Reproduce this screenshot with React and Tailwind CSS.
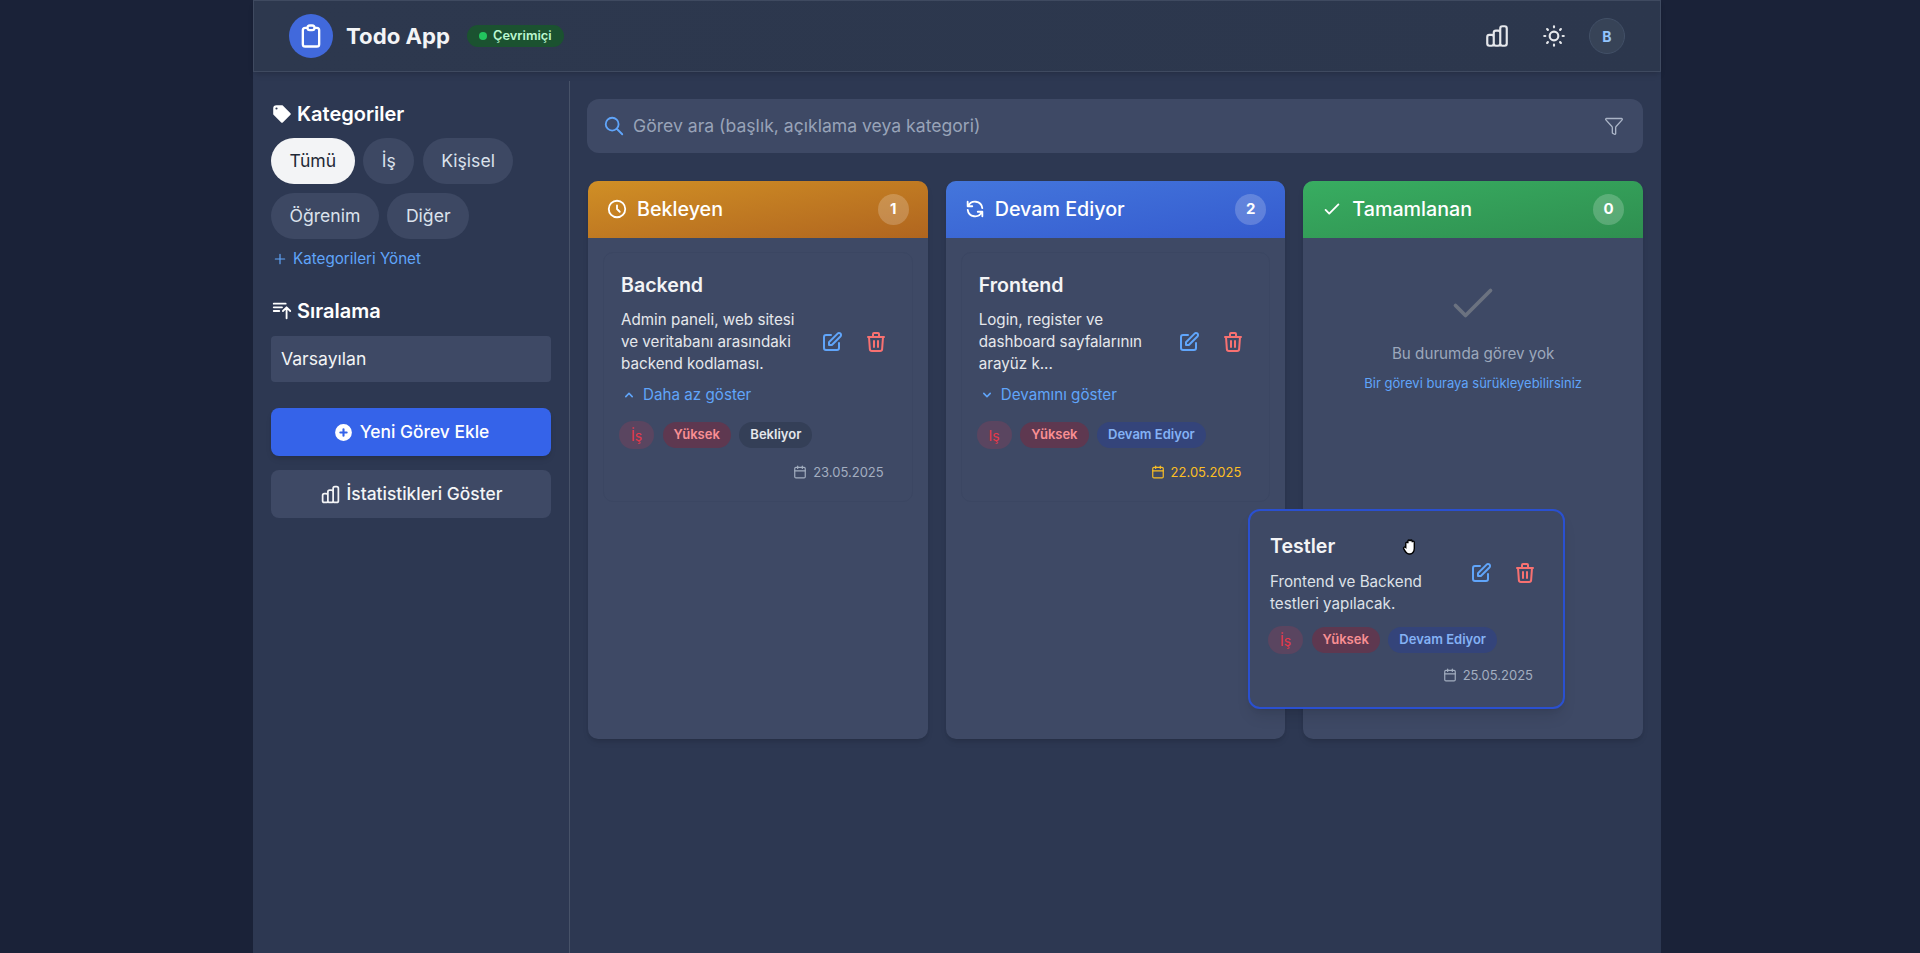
import {
  HiOutlineClipboard,
  HiOutlineChartBar,
  HiOutlineSun,
  HiTag,
  HiOutlineSortAscending,
  HiPlusCircle,
  HiOutlineClock,
  HiOutlineRefresh,
  HiOutlineCheck,
  HiOutlinePencilAlt,
  HiOutlineTrash,
  HiOutlineSearch,
  HiChevronUp,
  HiChevronDown,
  HiOutlinePlus,
} from 'react-icons/hi';
import { Calendar, Filter } from 'lucide-react';

function Chip({ label, active }) {
  return (
    <button
      className={`h-[46px] px-[18.5px] rounded-full text-[17.6px] ${
        active ? 'bg-[#f3f4f6] text-[#1f2937]' : 'bg-[#3d4863] text-[#dbe2ec]'
      }`}
    >
      {label}
    </button>
  );
}

function Badge({ label, className }) {
  return (
    <span
      className={`h-[26px] px-[11px] rounded-full flex items-center text-[13px] font-semibold ${className}`}
    >
      {label}
    </span>
  );
}

function Tags({ status, statusClass, dotted }) {
  return (
    <div className="flex items-center gap-[8.5px] -ml-[2px]">
      <span className="h-[28px] w-[35px] rounded-full bg-[#5a4560] text-[#e5394a] text-[14px] flex items-center justify-center">
        {dotted ? 'İş' : 'Iş'}
      </span>
      <Badge label="Yüksek" className="bg-[#5e3850] text-[#f98f93]" />
      <Badge label={status} className={statusClass} />
    </div>
  );
}

function CardActions({ className }) {
  return (
    <div className={`flex items-center gap-[20px] shrink-0 ${className}`}>
      <HiOutlinePencilAlt className="w-[24px] h-[24px] text-[#60a5fa]" />
      <HiOutlineTrash className="w-[24px] h-[24px] text-[#f87171]" />
    </div>
  );
}

function TaskCard({ title, lines, toggle, up, status, statusClass, date, dateClass, dotted }) {
  return (
    <div className="h-[250px] rounded-[10px] border border-[#3b4662] pl-[17px] pr-[17px] pt-[17px]">
      <h3 className="text-[19.6px] leading-[30px] font-semibold text-[#f3f4f6]">{title}</h3>
      <div className="flex items-center justify-between mt-[9px]">
        <p className="text-[15.2px] leading-[22px] text-[#e5e7eb] w-[190px]">
          {lines.map((l) => (
            <span key={l} className="block whitespace-nowrap">
              {l}
            </span>
          ))}
        </p>
        <CardActions className="mr-[7px]" />
      </div>
      <button className="flex items-center text-[15.2px] leading-[22px] text-[#60a5fa] mt-[9px]">
        {up ? (
          <HiChevronUp className="w-[16px] h-[16px] mr-[6px]" />
        ) : (
          <HiChevronDown className="w-[16px] h-[16px] mr-[6px]" />
        )}
        {toggle}
      </button>
      <div className="mt-[15px]">
        <Tags status={status} statusClass={statusClass} dotted={dotted} />
      </div>
      <div className={`flex items-center justify-end gap-[6px] mt-[13px] mr-[11px] text-[13px] leading-[20px] ${dateClass}`}>
        <Calendar className="w-[14px] h-[14px]" strokeWidth={2} />
        {date}
      </div>
    </div>
  );
}

function Column({ title, count, icon, headerClass, children }) {
  return (
    <div className="flex-1 h-[558px] rounded-[10px] bg-[#3e4965] shadow-md overflow-hidden">
      <div className={`h-[57px] flex items-center justify-between pl-[18px] pr-[19px] ${headerClass}`}>
        <div className="flex items-center gap-[9px] text-white text-[19.7px] font-medium">
          {icon}
          {title}
        </div>
        <span className="w-[31px] h-[31px] rounded-full bg-white/20 text-white text-[15px] font-bold flex items-center justify-center">
          {count}
        </span>
      </div>
      <div className="px-[15px] pt-[14px]">{children}</div>
    </div>
  );
}

export default function App() {
  return (
    <div
      className="h-[953px] overflow-hidden bg-[#1a2238] flex justify-center"
      style={{ fontFamily: 'Inter, "Noto Sans", sans-serif' }}
    >
      <div className="w-[1408px] h-full bg-[#2d3852] flex flex-col mr-[6px] relative">
        <header className="h-[72px] shrink-0 flex items-center justify-between pl-[35px] pr-[35px] bg-gradient-to-r from-[#2d384e] to-[#2c374d] border border-[#3f4a60] shadow-md">
          <div className="flex items-center">
            <span className="w-[44px] h-[44px] rounded-full bg-[#4169dc] flex items-center justify-center">
              <HiOutlineClipboard className="w-[28px] h-[28px] text-white" />
            </span>
            <span className="ml-[13px] text-[22.2px] font-bold text-[#f3f4f6]">Todo App</span>
            <span className="ml-[17px] h-[22px] pl-[12px] pr-[12px] rounded-full bg-[#1b5230] text-[#bbf7d0] text-[12.8px] font-semibold flex items-center gap-[6px]">
              <span className="w-[8px] h-[8px] rounded-full bg-[#22c55e]" />
              Çevrimiçi
            </span>
          </div>
          <div className="flex items-center">
            <HiOutlineChartBar className="w-[26px] h-[26px] text-[#e5e7eb]" />
            <HiOutlineSun className="w-[26px] h-[26px] text-[#e5e7eb] ml-[31px]" />
            <span className="ml-[22px] w-[36px] h-[36px] rounded-full bg-[#374357] border border-[#425067] text-[#93c5fd] text-[14px] font-bold flex items-center justify-center">
              B
            </span>
          </div>
        </header>

        <div className="flex flex-1 min-h-0">
          <aside className="w-[317px] shrink-0 pt-[18px] pl-[18px] pr-[18px] border-r border-[#475268] mt-[9px]">
            <h2 className="flex items-center gap-[4px] text-[20px] leading-[30px] font-semibold text-white">
              <HiTag className="w-[22px] h-[22px]" />
              Kategoriler
            </h2>
            <div className="flex flex-wrap gap-x-[8.5px] gap-y-[9px] mt-[9px]">
              <Chip label="Tümü" active />
              <Chip label="İş" />
              <Chip label="Kişisel" />
              <Chip label="Öğrenim" />
              <Chip label="Diğer" />
            </div>
            <button className="flex items-center gap-[6px] mt-[9px] ml-[2px] text-[15.2px] leading-[22px] text-[#60a5fa]">
              <HiOutlinePlus className="w-[14px] h-[14px]" />
              Kategorileri Yönet
            </button>
            <h2 className="flex items-center gap-[4px] mt-[26px] text-[20px] leading-[30px] font-semibold text-white">
              <HiOutlineSortAscending className="w-[22px] h-[22px]" />
              Sıralama
            </h2>
            <div className="mt-[10px] h-[46px] rounded-[4px] bg-[#3e4965] flex items-center pl-[10px] text-[17.6px] text-[#f3f4f6]">
              Varsayılan
            </div>
            <button className="mt-[26px] w-full h-[48px] rounded-[8px] bg-[#3563e9] text-white text-[17.4px] font-medium flex items-center justify-center gap-[6px] shadow-md">
              <HiPlusCircle className="w-[21px] h-[21px]" />
              Yeni Görev Ekle
            </button>
            <button className="mt-[14px] w-full h-[48px] rounded-[8px] bg-[#3e4965] text-[#f3f4f6] text-[17.4px] font-medium flex items-center justify-center gap-[6px]">
              <HiOutlineChartBar className="w-[21px] h-[21px]" />
              İstatistikleri Göster
            </button>
          </aside>

          <main className="flex-1 pl-[18px] pr-[18px] pt-[27px]">
            <div className="h-[54px] -ml-[1px] rounded-[12px] bg-[#3e4965] flex items-center justify-between pl-[16px] pr-[19px]">
              <div className="flex items-center gap-[8px] text-[17.6px] text-[#98a3b8]">
                <HiOutlineSearch className="w-[22px] h-[22px] text-[#60a5fa]" />
                Görev ara (başlık, açıklama veya kategori)
              </div>
              <Filter className="w-[20px] h-[20px] text-[#aab4c6]" strokeWidth={1.6} />
            </div>

            <div className="flex gap-[18px] mt-[28px]">
              <Column
                title="Bekleyen"
                count="1"
                headerClass="bg-gradient-to-br from-[#d08f25] to-[#b0651f]"
                icon={<HiOutlineClock className="w-[22px] h-[22px]" />}
              >
                <TaskCard
                  title="Backend"
                  lines={['Admin paneli, web sitesi', 've veritabanı arasındaki', 'backend kodlaması.']}
                  toggle="Daha az göster"
                  up
                  dotted
                  status="Bekliyor"
                  statusClass="bg-[#343f57] text-[#e5e7eb]"
                  date="23.05.2025"
                  dateClass="text-[#a3aec0]"
                />
              </Column>
              <Column
                title="Devam Ediyor"
                count="2"
                headerClass="bg-gradient-to-br from-[#4476dc] to-[#355bcf]"
                icon={<HiOutlineRefresh className="w-[22px] h-[22px]" />}
              >
                <TaskCard
                  title="Frontend"
                  lines={['Login, register ve', 'dashboard sayfalarının', 'arayüz k...']}
                  toggle="Devamını göster"
                  status="Devam Ediyor"
                  statusClass="bg-[#34447a] text-[#84b2f5] font-medium"
                  date="22.05.2025"
                  dateClass="text-[#fbbf24]"
                />
              </Column>
              <Column
                title="Tamamlanan"
                count="0"
                headerClass="bg-gradient-to-br from-[#38ad61] to-[#2f8f50]"
                icon={<HiOutlineCheck className="w-[22px] h-[22px]" />}
              >
                <div className="flex flex-col items-center pt-[21px]">
                  <HiOutlineCheck className="w-[60px] h-[60px] text-[#6b7280] [&_path]:[stroke-width:1.5]" />
                  <p className="mt-[9px] text-[15.2px] leading-[24px] text-[#9ca8bc]">Bu durumda görev yok</p>
                  <p className="mt-[8px] text-[13px] leading-[18px] text-[#60a5fa]">
                    Bir görevi buraya sürükleyebilirsiniz
                  </p>
                </div>
              </Column>
            </div>
          </main>
        </div>

        {/* dragged card */}
        <div className="absolute left-[995px] top-[509px] w-[317px] h-[200px] rounded-[12px] border-2 border-[#2a50d0] bg-[#3e4965] shadow-lg pl-[20px] pr-[30px] pt-[20px]">
          <h3 className="text-[19.6px] leading-[30px] font-semibold text-[#f3f4f6]">Testler</h3>
          <div className="flex justify-between items-start mt-[10px]">
            <p className="text-[15.2px] leading-[22px] text-[#dde1e8]">
              <span className="block">Frontend ve Backend</span>
              <span className="block">testleri yapılacak.</span>
            </p>
            <CardActions className="-mt-[10px] -mr-[4px]" />
          </div>
          <div className="mt-[11px]">
            <Tags
              status="Devam Ediyor"
              statusClass="bg-[#34447a] text-[#84b2f5] font-medium"
              dotted
            />
          </div>
          <div className="flex items-center justify-end gap-[6px] mt-[11px] text-[13px] leading-[20px] text-[#a3aec0]">
            <Calendar className="w-[14px] h-[14px]" strokeWidth={2} />
            25.05.2025
          </div>
          <svg viewBox="1 1 13 15" className="absolute left-[152px] top-[28px] w-[15px] h-[16px]" fill="#fff" stroke="#000" strokeWidth="1.3">
            <path d="M4 9V5a1 1 0 012 0V3a1 1 0 012 0v0a1 1 0 012 0V4a1 1 0 012 0v6c0 3-2 5-4 5H7C5 15 3 12 2 10c-.5-1 .8-2 2-1z" />
          </svg>
        </div>
      </div>
    </div>
  );
}
